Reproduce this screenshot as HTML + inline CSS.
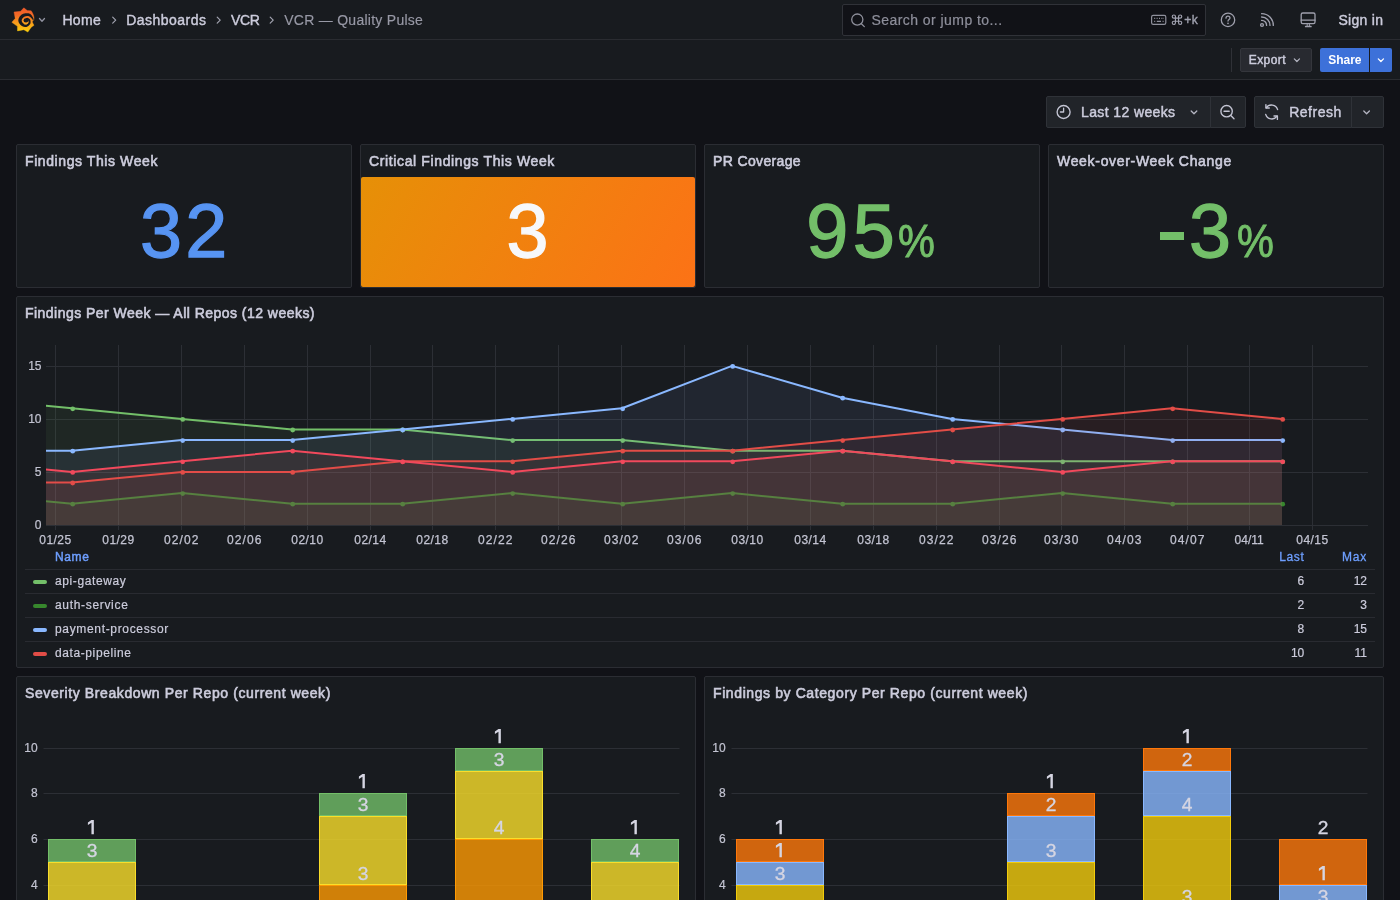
<!DOCTYPE html>
<html lang="en"><head><meta charset="utf-8"><title>VCR — Quality Pulse - Dashboards - Grafana</title>
<style>

*{box-sizing:border-box;margin:0;padding:0}
html,body{width:1400px;height:900px;overflow:hidden;background:#111217;font-family:"Liberation Sans",sans-serif;color:#ccccdc}
body{position:relative}
#root{position:absolute;left:0;top:0;width:1400px;height:900px;will-change:transform}
.t{position:absolute;white-space:pre;display:block}
.abs{position:absolute}
.grp{position:absolute;left:0;top:0;width:0;height:0}
.topnav{position:absolute;left:0;top:0;width:1400px;height:40px;background:#181b1f;border-bottom:1px solid #2a2c31}
.toolbar{position:absolute;left:0;top:40px;width:1400px;height:40px;background:#181b1f;border-bottom:1px solid #2a2c31}
.panel{position:absolute;background:#181b1f;border:1px solid #2b2d33;border-radius:2px;overflow:hidden}
.btn{position:absolute;background:#181b1f;border:1px solid #2e3036;border-radius:2px}
svg{position:absolute;overflow:visible}
svg text{font-family:"Liberation Sans",sans-serif}

</style></head>
<body>
<div id="root">
<div class="topnav"></div><div class="toolbar"></div>
<header class="grp">
<svg style="left:0;top:0" width="60" height="40" viewBox="0 0 60 40">
<defs><linearGradient id="lg" gradientUnits="userSpaceOnUse" x1="0" y1="7.8" x2="0" y2="32.2"><stop offset="0" stop-color="#f1592a"/><stop offset="0.3" stop-color="#f36a26"/><stop offset="0.62" stop-color="#f89c1c"/><stop offset="1" stop-color="#fcd10a"/></linearGradient></defs>
<path d="M23.83 7.83 L27.27 10.60 L31.17 10.83 L32.40 12.73 L33.53 15.33 L34.07 18.00 L33.80 20.00 L32.33 20.93 L32.60 22.83 L34.00 25.33 L31.27 27.13 L27.83 32.07 L23.83 29.73 L17.50 30.90 L17.40 26.33 L11.83 22.33 L15.20 18.40 L14.00 12.00 L20.60 11.33 Z" fill="url(#lg)" stroke="url(#lg)" stroke-width="0.4" stroke-linejoin="round"/>
<path d="M33.77 19.81 L33.64 19.12 L33.43 18.46 L33.16 17.83 L32.85 17.23 L32.50 16.65 L32.16 16.07 L31.77 15.52 L31.34 15.00 L30.86 14.51 L30.33 14.07 L29.77 13.69 L29.13 13.44 L28.46 13.28 L27.79 13.21 L27.12 13.19 L26.47 13.22 L25.83 13.27 L25.20 13.30 L24.58 13.38 L23.96 13.52 L23.36 13.72 L22.78 13.96 L22.23 14.26 L21.70 14.60 L21.20 14.98 L20.74 15.41 L20.30 15.86 L19.89 16.34 L19.52 16.86 L19.19 17.40 L18.91 17.98 L18.67 18.58 L18.50 19.21 L18.38 19.85 L18.33 20.50 L18.41 21.15 L18.56 21.78 L18.78 22.39 L19.06 22.97 L19.38 23.51 L19.74 24.02 L20.14 24.49 L20.56 24.92 L21.00 25.33 L21.46 25.71 L21.95 26.05 L22.47 26.32 L23.01 26.55 L23.57 26.73 L24.13 26.85 L24.70 26.93 L25.27 26.97 L25.83 26.97 L26.39 26.88 L26.93 26.73 L27.44 26.51 L27.92 26.24 L28.37 25.93 L28.77 25.59 L29.15 25.23 L29.49 24.86 L29.82 24.48 L30.09 24.07 L30.30 23.63 L30.45 23.16 L30.54 22.69 L30.57 22.23 L30.57 21.77 L30.54 21.33 L30.49 20.91 L30.43 20.50 L30.33 20.11 L30.15 19.74 L29.92 19.40 L29.66 19.11 L29.37 18.85 L29.07 18.63 L28.77 18.45 L28.48 18.28 L28.21 18.12 L27.95 17.98 L27.66 17.89 L27.36 17.85 L27.07 17.85 L26.78 17.89 L26.52 17.95 L26.27 18.02 L26.04 18.10 L25.83 18.17 L25.83 20.17 L25.87 20.10 L25.92 20.01 L25.99 19.90 L26.09 19.80 L26.21 19.70 L26.34 19.62 L26.48 19.57 L26.62 19.56 L26.75 19.58 L26.89 19.62 L27.05 19.65 L27.22 19.70 L27.41 19.76 L27.61 19.85 L27.79 19.98 L27.95 20.13 L28.08 20.30 L28.17 20.50 L28.25 20.71 L28.34 20.94 L28.44 21.20 L28.53 21.48 L28.58 21.78 L28.61 22.10 L28.58 22.42 L28.50 22.73 L28.36 23.02 L28.14 23.25 L27.91 23.46 L27.66 23.67 L27.40 23.85 L27.11 24.01 L26.81 24.15 L26.50 24.26 L26.17 24.33 L25.83 24.37 L25.50 24.35 L25.16 24.30 L24.84 24.23 L24.52 24.12 L24.21 23.99 L23.91 23.83 L23.63 23.64 L23.37 23.44 L23.12 23.21 L22.88 22.98 L22.65 22.73 L22.43 22.47 L22.23 22.18 L22.05 21.88 L21.90 21.55 L21.79 21.21 L21.71 20.86 L21.67 20.50 L21.70 20.14 L21.78 19.79 L21.89 19.44 L22.04 19.12 L22.21 18.81 L22.41 18.52 L22.62 18.25 L22.85 18.00 L23.10 17.77 L23.33 17.52 L23.58 17.28 L23.85 17.06 L24.13 16.85 L24.44 16.67 L24.77 16.52 L25.11 16.39 L25.47 16.31 L25.83 16.27 L26.21 16.17 L26.62 16.05 L27.05 15.94 L27.51 15.88 L27.98 15.89 L28.43 16.00 L28.86 16.18 L29.28 16.39 L29.71 16.62 L30.12 16.90 L30.50 17.23 L30.83 17.62 L31.21 17.99 L31.63 18.39 L32.05 18.84 L32.40 19.34 L32.64 19.90 Z" fill="#181b1f"/>
<ellipse cx="25.93" cy="20.40" rx="2.35" ry="2.1" fill="#181b1f"/>
<path d="M24.67 24.17 Q27.00 24.50 27.67 23.17" fill="none" stroke="#f9a51a" stroke-width="0.9" stroke-linecap="round"/>
</svg>
<svg style="left:0;top:0" width="1" height="1"><path d="M39.5 18.5 L42 21.2 L44.5 18.5" fill="none" stroke="#9293a1" stroke-width="1.3" stroke-linecap="round" stroke-linejoin="round"/></svg>
<span class="t" style="left:62.40px;top:11.65px;font-size:14px;line-height:17px;color:#ccccdc;letter-spacing:0.360px;-webkit-text-stroke:0.4px #ccccdc;">Home</span>
<svg style="left:0;top:0" width="1" height="1"><path d="M112.70 17.20 L115.70 20.20 L112.70 23.20" fill="none" stroke="#a2a3b0" stroke-width="1.2" stroke-linecap="round" stroke-linejoin="round"/></svg>
<span class="t" style="left:126.20px;top:11.65px;font-size:14px;line-height:17px;color:#ccccdc;letter-spacing:0.480px;-webkit-text-stroke:0.4px #ccccdc;">Dashboards</span>
<svg style="left:0;top:0" width="1" height="1"><path d="M217.20 17.20 L220.20 20.20 L217.20 23.20" fill="none" stroke="#a2a3b0" stroke-width="1.2" stroke-linecap="round" stroke-linejoin="round"/></svg>
<span class="t" style="left:231.00px;top:11.65px;font-size:14px;line-height:17px;color:#ccccdc;letter-spacing:-0.354px;-webkit-text-stroke:0.4px #ccccdc;">VCR</span>
<svg style="left:0;top:0" width="1" height="1"><path d="M270.20 17.20 L273.20 20.20 L270.20 23.20" fill="none" stroke="#a2a3b0" stroke-width="1.2" stroke-linecap="round" stroke-linejoin="round"/></svg>
<span class="t" style="left:284.20px;top:11.65px;font-size:14px;line-height:17px;color:#9899a6;letter-spacing:0.272px;-webkit-text-stroke:0.15px #9899a6;">VCR — Quality Pulse</span>
<div class="abs" style="left:842px;top:4px;width:364px;height:32px;background:#111217;border:1px solid #303238;border-radius:2px"></div>
<svg style="left:0;top:0" width="1" height="1"><circle cx="857.3" cy="19.6" r="5.6" fill="none" stroke="#8f909c" stroke-width="1.3"/><path d="M861.4 23.8 L864.3 26.6" stroke="#8f909c" stroke-width="1.3" stroke-linecap="round"/></svg>
<span class="t" style="left:871.50px;top:11.65px;font-size:14px;line-height:17px;color:#8e8f9b;letter-spacing:0.441px;-webkit-text-stroke:0.2px #8e8f9b;">Search or jump to...</span>
<svg style="left:0;top:0" width="1" height="1"><rect x="1151.6" y="15.4" width="14.2" height="9" rx="1.6" fill="none" stroke="#8f909c" stroke-width="1.2"/>
<path d="M1154.2 18.4h1 M1156.6 18.4h1 M1159 18.4h1 M1161.4 18.4h1 M1163 18.4h.4 M1154.2 21.4h1 M1156.8 21.4h4.2 M1162.6 21.4h1" stroke="#8f909c" stroke-width="1.1"/></svg>
<svg style="left:0;top:0" width="1" height="1"><path d="M1175.45 18.15 V16.55 A1.6 1.6 0 1 0 1173.85 18.15 H1175.45 M1175.45 21.25 V22.85 A1.6 1.6 0 1 1 1173.85 21.25 H1175.45 M1178.55 18.15 V16.55 A1.6 1.6 0 1 1 1180.15 18.15 H1178.55 M1178.55 21.25 V22.85 A1.6 1.6 0 1 0 1180.15 21.25 H1178.55 M1175.45 18.15 H1178.55 V21.25 H1175.45 Z" fill="none" stroke="#a0a1af" stroke-width="1.15" stroke-linejoin="round"/></svg>
<span class="t" style="left:1184.20px;top:13.04px;font-size:12px;line-height:14px;color:#a0a1af;letter-spacing:0.592px;-webkit-text-stroke:0.35px #a0a1af;">+k</span>
<svg style="left:0;top:0" width="1" height="1"><circle cx="1228" cy="19.9" r="6.7" fill="none" stroke="#9fa0ad" stroke-width="1.3"/>
<path d="M1226 18.2c0-1.3 .9-2 2-2s2 .7 2 1.9c0 1.4-2 1.5-2 3" fill="none" stroke="#9fa0ad" stroke-width="1.25" stroke-linecap="round"/><circle cx="1228" cy="23.3" r=".85" fill="#9fa0ad"/></svg>
<svg style="left:0;top:0" width="1" height="1"><g fill="none" stroke="#9fa0ad" stroke-width="1.35" stroke-linecap="round">
<circle cx="1262" cy="25" r="1.4"/><path d="M1261.6 20.4a4.9 4.9 0 0 1 5 5"/><path d="M1261.6 17a8.3 8.3 0 0 1 8.4 8.4"/><path d="M1261.6 13.7a11.6 11.6 0 0 1 11.7 11.7"/></g></svg>
<svg style="left:0;top:0" width="1" height="1"><g fill="none" stroke="#9fa0ad" stroke-width="1.3" stroke-linejoin="round" stroke-linecap="round">
<rect x="1301.2" y="13" width="13.8" height="10.6" rx="1.6"/><path d="M1301.2 20.2h13.8"/><path d="M1305.7 26.5h5.2" stroke-width="1.7"/><path d="M1307.2 24v2 M1309.4 24v2" stroke-width="1"/></g></svg>
<span class="t" style="left:1338.40px;top:11.65px;font-size:14px;line-height:17px;color:#ccccdc;letter-spacing:0.312px;-webkit-text-stroke:0.4px #ccccdc;">Sign in</span>
</header>
<div class="grp">
<div class="abs" style="left:1231px;top:48px;width:1px;height:24px;background:#2f3137"></div>
<div class="abs" style="left:1240px;top:48px;width:72px;height:24px;background:#282a30;border:1px solid #34363c;border-radius:2px"></div>
<span class="t" style="left:1248.70px;top:53.04px;font-size:12px;line-height:14px;color:#ccccdc;letter-spacing:0.452px;-webkit-text-stroke:0.45px #ccccdc;">Export</span>
<svg style="left:0;top:0" width="1" height="1"><path d="M1294.30 58.90 L1296.90 61.50 L1299.50 58.90" fill="none" stroke="#b4b5c2" stroke-width="1.2" stroke-linecap="round" stroke-linejoin="round"/></svg>
<div class="abs" style="left:1320px;top:48px;width:49px;height:24px;background:#3d71d9;border-radius:2px 0 0 2px"></div>
<div class="abs" style="left:1370px;top:48px;width:22px;height:24px;background:#3d71d9;border-radius:0 2px 2px 0"></div>
<span class="t" style="left:1328.30px;top:53.04px;font-size:12px;line-height:14px;color:#ffffff;font-weight:700;letter-spacing:-0.032px;">Share</span>
<svg style="left:0;top:0" width="1" height="1"><path d="M1378.30 58.90 L1380.90 61.50 L1383.50 58.90" fill="none" stroke="#ffffff" stroke-width="1.3" stroke-linecap="round" stroke-linejoin="round"/></svg>
</div>
<div class="grp">
<div class="abs" style="left:1046px;top:96px;width:165px;height:32px;background:#212429;border:1px solid #2f3238;border-radius:2px 0 0 2px"></div>
<div class="abs" style="left:1210px;top:96px;width:36px;height:32px;background:#212429;border:1px solid #2f3238;border-radius:0 2px 2px 0"></div>
<div class="abs" style="left:1254px;top:96px;width:98px;height:32px;background:#212429;border:1px solid #2f3238;border-radius:2px 0 0 2px"></div>
<div class="abs" style="left:1351px;top:96px;width:33px;height:32px;background:#212429;border:1px solid #2f3238;border-radius:0 2px 2px 0"></div>
<svg style="left:0;top:0" width="1" height="1"><circle cx="1063.6" cy="112" r="6.5" fill="none" stroke="#c4c5d4" stroke-width="1.35"/><path d="M1063.6 108.2v3.8h-3.2" fill="none" stroke="#c4c5d4" stroke-width="1.3" stroke-linecap="round" stroke-linejoin="round"/></svg>
<span class="t" style="left:1081.00px;top:103.75px;font-size:14px;line-height:17px;color:#ccccdc;letter-spacing:0.385px;-webkit-text-stroke:0.45px #ccccdc;">Last 12 weeks</span>
<svg style="left:0;top:0" width="1" height="1"><path d="M1191.20 111.00 L1194.00 113.80 L1196.80 111.00" fill="none" stroke="#b4b5c2" stroke-width="1.3" stroke-linecap="round" stroke-linejoin="round"/></svg>
<svg style="left:0;top:0" width="1" height="1"><circle cx="1226.6" cy="111.2" r="5.7" fill="none" stroke="#c4c5d4" stroke-width="1.35"/><path d="M1224 111.2h5.2 M1230.8 115.6l3.2 3.2" fill="none" stroke="#c4c5d4" stroke-width="1.35" stroke-linecap="round"/></svg>
<svg style="left:0;top:0" width="1" height="1"><g transform="translate(2543.2 0) scale(-1 1)" fill="none" stroke="#c4c5d4" stroke-width="1.35" stroke-linecap="round" stroke-linejoin="round"><path d="M1265.6 109.6a6.4 6.4 0 0 1 11.4-1.8"/><path d="M1277.3 104.6v3.4h-3.4"/><path d="M1277.5 114.4a6.4 6.4 0 0 1-11.4 1.8"/><path d="M1265.8 119.4v-3.4h3.4"/></g></svg>
<span class="t" style="left:1289.20px;top:103.75px;font-size:14px;line-height:17px;color:#ccccdc;letter-spacing:0.510px;-webkit-text-stroke:0.45px #ccccdc;">Refresh</span>
<svg style="left:0;top:0" width="1" height="1"><path d="M1363.80 111.00 L1366.60 113.80 L1369.40 111.00" fill="none" stroke="#b4b5c2" stroke-width="1.3" stroke-linecap="round" stroke-linejoin="round"/></svg>
</div>
<section class="grp">
<div class="panel" style="left:16px;top:144px;width:336px;height:144px"></div><span class="t" style="left:25.00px;top:152.75px;font-size:14px;line-height:17px;color:#ccccdc;letter-spacing:0.587px;-webkit-text-stroke:0.6px #ccccdc;">Findings This Week</span>
<span class="t" style="left:140.00px;top:185.80px;font-size:75.6px;line-height:91px;color:#5794f2;-webkit-text-stroke:1.3px #5794f2;letter-spacing:3.2px;">32</span>
</section>
<section class="grp">
<div class="panel" style="left:360px;top:144px;width:336px;height:144px"></div><span class="t" style="left:369.00px;top:152.75px;font-size:14px;line-height:17px;color:#ccccdc;letter-spacing:0.626px;-webkit-text-stroke:0.6px #ccccdc;">Critical Findings This Week</span>
<div class="abs" style="left:361px;top:177px;width:334px;height:110px;border-radius:2px;background:linear-gradient(120deg,#e69007,#fc7216)"></div>
<span class="t" style="left:506.60px;top:185.80px;font-size:75.6px;line-height:91px;color:#f7f8fa;-webkit-text-stroke:1.3px #f7f8fa;letter-spacing:3.2px;">3</span>
</section>
<section class="grp">
<div class="panel" style="left:704px;top:144px;width:336px;height:144px"></div><span class="t" style="left:713.00px;top:152.75px;font-size:14px;line-height:17px;color:#ccccdc;letter-spacing:0.359px;-webkit-text-stroke:0.6px #ccccdc;">PR Coverage</span>
<span class="t" style="left:806.20px;top:185.80px;font-size:75.6px;line-height:91px;color:#73bf69;-webkit-text-stroke:1.3px #73bf69;letter-spacing:4.4px;">95</span>
<span class="t" style="left:898.40px;top:214.43px;font-size:45.8px;line-height:55px;color:#73bf69;-webkit-text-stroke:0.9px #73bf69;transform:scaleX(.905);transform-origin:0 50%;">%</span>
</section>
<section class="grp">
<div class="panel" style="left:1048px;top:144px;width:336px;height:144px"></div><span class="t" style="left:1057.00px;top:152.75px;font-size:14px;line-height:17px;color:#ccccdc;letter-spacing:0.688px;-webkit-text-stroke:0.6px #ccccdc;">Week-over-Week Change</span>
<div class="abs" style="left:1160px;top:232px;width:24.4px;height:7.8px;background:#73bf69"></div>
<span class="t" style="left:1189.00px;top:185.80px;font-size:75.6px;line-height:91px;color:#73bf69;-webkit-text-stroke:1.3px #73bf69;letter-spacing:3.2px;">3</span>
<span class="t" style="left:1236.60px;top:214.43px;font-size:45.8px;line-height:55px;color:#73bf69;-webkit-text-stroke:0.9px #73bf69;transform:scaleX(.905);transform-origin:0 50%;">%</span>
</section>
<section class="grp">
<div class="panel" style="left:16px;top:296px;width:1368px;height:372px"></div><span class="t" style="left:25.00px;top:304.75px;font-size:14px;line-height:17px;color:#ccccdc;letter-spacing:0.467px;-webkit-text-stroke:0.6px #ccccdc;">Findings Per Week — All Repos (12 weeks)</span>
<svg style="left:0;top:0" width="1400" height="900" viewBox="0 0 1400 900">
<defs><clipPath id="tsclip"><rect x="46.0" y="339.0" width="1321.5" height="186.0"/></clipPath></defs>
<path d="M55.5 345.0 V529.5 M118.5 345.0 V529.5 M181.5 345.0 V529.5 M244.5 345.0 V529.5 M307.5 345.0 V529.5 M370.5 345.0 V529.5 M432.5 345.0 V529.5 M495.5 345.0 V529.5 M558.5 345.0 V529.5 M621.5 345.0 V529.5 M684.5 345.0 V529.5 M747.5 345.0 V529.5 M810.5 345.0 V529.5 M873.5 345.0 V529.5 M936.5 345.0 V529.5 M999.5 345.0 V529.5 M1061.5 345.0 V529.5 M1124.5 345.0 V529.5 M1187.5 345.0 V529.5 M1249.5 345.0 V529.5 M1312.5 345.0 V529.5 M46.0 525.5 H1367.5 M46.0 472.5 H1367.5 M46.0 419.5 H1367.5 M46.0 366.5 H1367.5 " stroke="#2c2f35" stroke-width="1" fill="none" shape-rendering="crispEdges"/>
<g clip-path="url(#tsclip)">
<path d="M-38.0 397.7 L72.0 408.3 L182.0 418.9 L292.0 429.5 L402.0 429.5 L512.0 440.1 L622.0 440.1 L732.0 450.7 L842.0 450.7 L952.0 461.3 L1062.0 461.3 L1172.0 461.3 L1282.0 461.3 L1282.0 525.0 L-38.0 525.0 Z" fill="#73bf69" fill-opacity="0.08" stroke="none"/>
<path d="M-38.0 397.7 L72.0 408.3 L182.0 418.9 L292.0 429.5 L402.0 429.5 L512.0 440.1 L622.0 440.1 L732.0 450.7 L842.0 450.7 L952.0 461.3 L1062.0 461.3 L1172.0 461.3 L1282.0 461.3" fill="none" stroke="#73bf69" stroke-width="2" stroke-linejoin="round"/>
<circle cx="72.7" cy="408.8" r="2.4" fill="#73bf69"/>
<circle cx="182.7" cy="419.4" r="2.4" fill="#73bf69"/>
<circle cx="292.7" cy="430.0" r="2.4" fill="#73bf69"/>
<circle cx="402.7" cy="430.0" r="2.4" fill="#73bf69"/>
<circle cx="512.7" cy="440.6" r="2.4" fill="#73bf69"/>
<circle cx="622.7" cy="440.6" r="2.4" fill="#73bf69"/>
<circle cx="732.7" cy="451.2" r="2.4" fill="#73bf69"/>
<circle cx="842.7" cy="451.2" r="2.4" fill="#73bf69"/>
<circle cx="952.7" cy="461.8" r="2.4" fill="#73bf69"/>
<circle cx="1062.7" cy="461.8" r="2.4" fill="#73bf69"/>
<circle cx="1172.7" cy="461.8" r="2.4" fill="#73bf69"/>
<circle cx="1282.7" cy="461.8" r="2.4" fill="#73bf69"/>
<path d="M-38.0 493.1 L72.0 503.7 L182.0 493.1 L292.0 503.7 L402.0 503.7 L512.0 493.1 L622.0 503.7 L732.0 493.1 L842.0 503.7 L952.0 503.7 L1062.0 493.1 L1172.0 503.7 L1282.0 503.7 L1282.0 525.0 L-38.0 525.0 Z" fill="#37872d" fill-opacity="0.08" stroke="none"/>
<path d="M-38.0 493.1 L72.0 503.7 L182.0 493.1 L292.0 503.7 L402.0 503.7 L512.0 493.1 L622.0 503.7 L732.0 493.1 L842.0 503.7 L952.0 503.7 L1062.0 493.1 L1172.0 503.7 L1282.0 503.7" fill="none" stroke="#37872d" stroke-width="2" stroke-linejoin="round"/>
<circle cx="72.7" cy="504.2" r="2.4" fill="#37872d"/>
<circle cx="182.7" cy="493.6" r="2.4" fill="#37872d"/>
<circle cx="292.7" cy="504.2" r="2.4" fill="#37872d"/>
<circle cx="402.7" cy="504.2" r="2.4" fill="#37872d"/>
<circle cx="512.7" cy="493.6" r="2.4" fill="#37872d"/>
<circle cx="622.7" cy="504.2" r="2.4" fill="#37872d"/>
<circle cx="732.7" cy="493.6" r="2.4" fill="#37872d"/>
<circle cx="842.7" cy="504.2" r="2.4" fill="#37872d"/>
<circle cx="952.7" cy="504.2" r="2.4" fill="#37872d"/>
<circle cx="1062.7" cy="493.6" r="2.4" fill="#37872d"/>
<circle cx="1172.7" cy="504.2" r="2.4" fill="#37872d"/>
<circle cx="1282.7" cy="504.2" r="2.4" fill="#37872d"/>
<path d="M-38.0 450.7 L72.0 450.7 L182.0 440.1 L292.0 440.1 L402.0 429.5 L512.0 418.9 L622.0 408.3 L732.0 365.9 L842.0 397.7 L952.0 418.9 L1062.0 429.5 L1172.0 440.1 L1282.0 440.1 L1282.0 525.0 L-38.0 525.0 Z" fill="#8ab8ff" fill-opacity="0.08" stroke="none"/>
<path d="M-38.0 450.7 L72.0 450.7 L182.0 440.1 L292.0 440.1 L402.0 429.5 L512.0 418.9 L622.0 408.3 L732.0 365.9 L842.0 397.7 L952.0 418.9 L1062.0 429.5 L1172.0 440.1 L1282.0 440.1" fill="none" stroke="#8ab8ff" stroke-width="2" stroke-linejoin="round"/>
<circle cx="72.7" cy="451.2" r="2.4" fill="#8ab8ff"/>
<circle cx="182.7" cy="440.6" r="2.4" fill="#8ab8ff"/>
<circle cx="292.7" cy="440.6" r="2.4" fill="#8ab8ff"/>
<circle cx="402.7" cy="430.0" r="2.4" fill="#8ab8ff"/>
<circle cx="512.7" cy="419.4" r="2.4" fill="#8ab8ff"/>
<circle cx="622.7" cy="408.8" r="2.4" fill="#8ab8ff"/>
<circle cx="732.7" cy="366.4" r="2.4" fill="#8ab8ff"/>
<circle cx="842.7" cy="398.2" r="2.4" fill="#8ab8ff"/>
<circle cx="952.7" cy="419.4" r="2.4" fill="#8ab8ff"/>
<circle cx="1062.7" cy="430.0" r="2.4" fill="#8ab8ff"/>
<circle cx="1172.7" cy="440.6" r="2.4" fill="#8ab8ff"/>
<circle cx="1282.7" cy="440.6" r="2.4" fill="#8ab8ff"/>
<path d="M-38.0 482.5 L72.0 482.5 L182.0 471.9 L292.0 471.9 L402.0 461.3 L512.0 461.3 L622.0 450.7 L732.0 450.7 L842.0 440.1 L952.0 429.5 L1062.0 418.9 L1172.0 408.3 L1282.0 418.9 L1282.0 525.0 L-38.0 525.0 Z" fill="#e24d47" fill-opacity="0.08" stroke="none"/>
<path d="M-38.0 482.5 L72.0 482.5 L182.0 471.9 L292.0 471.9 L402.0 461.3 L512.0 461.3 L622.0 450.7 L732.0 450.7 L842.0 440.1 L952.0 429.5 L1062.0 418.9 L1172.0 408.3 L1282.0 418.9" fill="none" stroke="#e24d47" stroke-width="2" stroke-linejoin="round"/>
<circle cx="72.7" cy="483.0" r="2.4" fill="#e24d47"/>
<circle cx="182.7" cy="472.4" r="2.4" fill="#e24d47"/>
<circle cx="292.7" cy="472.4" r="2.4" fill="#e24d47"/>
<circle cx="402.7" cy="461.8" r="2.4" fill="#e24d47"/>
<circle cx="512.7" cy="461.8" r="2.4" fill="#e24d47"/>
<circle cx="622.7" cy="451.2" r="2.4" fill="#e24d47"/>
<circle cx="732.7" cy="451.2" r="2.4" fill="#e24d47"/>
<circle cx="842.7" cy="440.6" r="2.4" fill="#e24d47"/>
<circle cx="952.7" cy="430.0" r="2.4" fill="#e24d47"/>
<circle cx="1062.7" cy="419.4" r="2.4" fill="#e24d47"/>
<circle cx="1172.7" cy="408.8" r="2.4" fill="#e24d47"/>
<circle cx="1282.7" cy="419.4" r="2.4" fill="#e24d47"/>
<path d="M-38.0 461.3 L72.0 471.9 L182.0 461.3 L292.0 450.7 L402.0 461.3 L512.0 471.9 L622.0 461.3 L732.0 461.3 L842.0 450.7 L952.0 461.3 L1062.0 471.9 L1172.0 461.3 L1282.0 461.3 L1282.0 525.0 L-38.0 525.0 Z" fill="#f2495c" fill-opacity="0.08" stroke="none"/>
<path d="M-38.0 461.3 L72.0 471.9 L182.0 461.3 L292.0 450.7 L402.0 461.3 L512.0 471.9 L622.0 461.3 L732.0 461.3 L842.0 450.7 L952.0 461.3 L1062.0 471.9 L1172.0 461.3 L1282.0 461.3" fill="none" stroke="#f2495c" stroke-width="2" stroke-linejoin="round"/>
<circle cx="72.7" cy="472.4" r="2.4" fill="#f2495c"/>
<circle cx="182.7" cy="461.8" r="2.4" fill="#f2495c"/>
<circle cx="292.7" cy="451.2" r="2.4" fill="#f2495c"/>
<circle cx="402.7" cy="461.8" r="2.4" fill="#f2495c"/>
<circle cx="512.7" cy="472.4" r="2.4" fill="#f2495c"/>
<circle cx="622.7" cy="461.8" r="2.4" fill="#f2495c"/>
<circle cx="732.7" cy="461.8" r="2.4" fill="#f2495c"/>
<circle cx="842.7" cy="451.2" r="2.4" fill="#f2495c"/>
<circle cx="952.7" cy="461.8" r="2.4" fill="#f2495c"/>
<circle cx="1062.7" cy="472.4" r="2.4" fill="#f2495c"/>
<circle cx="1172.7" cy="461.8" r="2.4" fill="#f2495c"/>
<circle cx="1282.7" cy="461.8" r="2.4" fill="#f2495c"/>
</g>
<text x="41.5" y="529.1" font-size="12" fill="#c3c4d2" stroke="#c3c4d2" stroke-width="0.2" text-anchor="end">0</text>
<text x="41.5" y="476.1" font-size="12" fill="#c3c4d2" stroke="#c3c4d2" stroke-width="0.2" text-anchor="end">5</text>
<text x="41.5" y="423.1" font-size="12" fill="#c3c4d2" stroke="#c3c4d2" stroke-width="0.2" text-anchor="end">10</text>
<text x="41.5" y="370.1" font-size="12" fill="#c3c4d2" stroke="#c3c4d2" stroke-width="0.2" text-anchor="end">15</text>
<text x="55.2" y="543.8" font-size="12" fill="#c3c4d2" stroke="#c3c4d2" stroke-width="0.25" text-anchor="middle" textLength="31.8" lengthAdjust="spacing">01/25</text>
<text x="118.2" y="543.8" font-size="12" fill="#c3c4d2" stroke="#c3c4d2" stroke-width="0.25" text-anchor="middle" textLength="31.8" lengthAdjust="spacing">01/29</text>
<text x="181.2" y="543.8" font-size="12" fill="#c3c4d2" stroke="#c3c4d2" stroke-width="0.25" text-anchor="middle" textLength="34.4" lengthAdjust="spacing">02/02</text>
<text x="244.2" y="543.8" font-size="12" fill="#c3c4d2" stroke="#c3c4d2" stroke-width="0.25" text-anchor="middle" textLength="34.4" lengthAdjust="spacing">02/06</text>
<text x="307.2" y="543.8" font-size="12" fill="#c3c4d2" stroke="#c3c4d2" stroke-width="0.25" text-anchor="middle" textLength="31.8" lengthAdjust="spacing">02/10</text>
<text x="370.2" y="543.8" font-size="12" fill="#c3c4d2" stroke="#c3c4d2" stroke-width="0.25" text-anchor="middle" textLength="31.8" lengthAdjust="spacing">02/14</text>
<text x="432.2" y="543.8" font-size="12" fill="#c3c4d2" stroke="#c3c4d2" stroke-width="0.25" text-anchor="middle" textLength="31.8" lengthAdjust="spacing">02/18</text>
<text x="495.2" y="543.8" font-size="12" fill="#c3c4d2" stroke="#c3c4d2" stroke-width="0.25" text-anchor="middle" textLength="34.4" lengthAdjust="spacing">02/22</text>
<text x="558.2" y="543.8" font-size="12" fill="#c3c4d2" stroke="#c3c4d2" stroke-width="0.25" text-anchor="middle" textLength="34.4" lengthAdjust="spacing">02/26</text>
<text x="621.2" y="543.8" font-size="12" fill="#c3c4d2" stroke="#c3c4d2" stroke-width="0.25" text-anchor="middle" textLength="34.4" lengthAdjust="spacing">03/02</text>
<text x="684.2" y="543.8" font-size="12" fill="#c3c4d2" stroke="#c3c4d2" stroke-width="0.25" text-anchor="middle" textLength="34.4" lengthAdjust="spacing">03/06</text>
<text x="747.2" y="543.8" font-size="12" fill="#c3c4d2" stroke="#c3c4d2" stroke-width="0.25" text-anchor="middle" textLength="31.8" lengthAdjust="spacing">03/10</text>
<text x="810.2" y="543.8" font-size="12" fill="#c3c4d2" stroke="#c3c4d2" stroke-width="0.25" text-anchor="middle" textLength="31.8" lengthAdjust="spacing">03/14</text>
<text x="873.2" y="543.8" font-size="12" fill="#c3c4d2" stroke="#c3c4d2" stroke-width="0.25" text-anchor="middle" textLength="31.8" lengthAdjust="spacing">03/18</text>
<text x="936.2" y="543.8" font-size="12" fill="#c3c4d2" stroke="#c3c4d2" stroke-width="0.25" text-anchor="middle" textLength="34.4" lengthAdjust="spacing">03/22</text>
<text x="999.2" y="543.8" font-size="12" fill="#c3c4d2" stroke="#c3c4d2" stroke-width="0.25" text-anchor="middle" textLength="34.4" lengthAdjust="spacing">03/26</text>
<text x="1061.2" y="543.8" font-size="12" fill="#c3c4d2" stroke="#c3c4d2" stroke-width="0.25" text-anchor="middle" textLength="34.4" lengthAdjust="spacing">03/30</text>
<text x="1124.2" y="543.8" font-size="12" fill="#c3c4d2" stroke="#c3c4d2" stroke-width="0.25" text-anchor="middle" textLength="34.4" lengthAdjust="spacing">04/03</text>
<text x="1187.2" y="543.8" font-size="12" fill="#c3c4d2" stroke="#c3c4d2" stroke-width="0.25" text-anchor="middle" textLength="34.4" lengthAdjust="spacing">04/07</text>
<text x="1249.2" y="543.8" font-size="12" fill="#c3c4d2" stroke="#c3c4d2" stroke-width="0.25" text-anchor="middle" textLength="29.2" lengthAdjust="spacing">04/11</text>
<text x="1312.2" y="543.8" font-size="12" fill="#c3c4d2" stroke="#c3c4d2" stroke-width="0.25" text-anchor="middle" textLength="31.8" lengthAdjust="spacing">04/15</text>
</svg>
<span class="t" style="left:55.00px;top:549.64px;font-size:12px;line-height:14px;color:#6e9fff;letter-spacing:0.621px;-webkit-text-stroke:0.45px #6e9fff;">Name</span>
<span class="t" style="left:1279.30px;top:549.64px;font-size:12px;line-height:14px;color:#6e9fff;letter-spacing:0.578px;-webkit-text-stroke:0.3px #6e9fff;">Last</span>
<span class="t" style="left:1342.00px;top:549.64px;font-size:12px;line-height:14px;color:#6e9fff;letter-spacing:0.776px;-webkit-text-stroke:0.3px #6e9fff;">Max</span>
<div class="abs" style="left:25px;top:569px;width:1350px;height:1px;background:#292b31"></div>
<div class="abs" style="left:33px;top:580px;width:14px;height:4px;border-radius:2px;background:#73bf69"></div>
<span class="t" style="left:55.00px;top:573.54px;font-size:12px;line-height:14px;color:#ccccdc;letter-spacing:0.616px;-webkit-text-stroke:0.2px #ccccdc;">api-gateway</span>
<span class="t" style="left:1297.61px;top:573.54px;font-size:12px;line-height:14px;color:#ccccdc;-webkit-text-stroke:0.2px #ccccdc;">6</span>
<span class="t" style="left:1353.64px;top:573.54px;font-size:12px;line-height:14px;color:#ccccdc;-webkit-text-stroke:0.2px #ccccdc;">12</span>
<div class="abs" style="left:25px;top:593px;width:1350px;height:1px;background:#292b31"></div>
<div class="abs" style="left:33px;top:604px;width:14px;height:4px;border-radius:2px;background:#37872d"></div>
<span class="t" style="left:55.00px;top:597.54px;font-size:12px;line-height:14px;color:#ccccdc;letter-spacing:0.677px;-webkit-text-stroke:0.2px #ccccdc;">auth-service</span>
<span class="t" style="left:1297.61px;top:597.54px;font-size:12px;line-height:14px;color:#ccccdc;-webkit-text-stroke:0.2px #ccccdc;">2</span>
<span class="t" style="left:1360.31px;top:597.54px;font-size:12px;line-height:14px;color:#ccccdc;-webkit-text-stroke:0.2px #ccccdc;">3</span>
<div class="abs" style="left:25px;top:617px;width:1350px;height:1px;background:#292b31"></div>
<div class="abs" style="left:33px;top:628px;width:14px;height:4px;border-radius:2px;background:#8ab8ff"></div>
<span class="t" style="left:55.00px;top:621.54px;font-size:12px;line-height:14px;color:#ccccdc;letter-spacing:0.664px;-webkit-text-stroke:0.2px #ccccdc;">payment-processor</span>
<span class="t" style="left:1297.61px;top:621.54px;font-size:12px;line-height:14px;color:#ccccdc;-webkit-text-stroke:0.2px #ccccdc;">8</span>
<span class="t" style="left:1353.64px;top:621.54px;font-size:12px;line-height:14px;color:#ccccdc;-webkit-text-stroke:0.2px #ccccdc;">15</span>
<div class="abs" style="left:25px;top:641px;width:1350px;height:1px;background:#292b31"></div>
<div class="abs" style="left:33px;top:652px;width:14px;height:4px;border-radius:2px;background:#e24d47"></div>
<span class="t" style="left:55.00px;top:645.54px;font-size:12px;line-height:14px;color:#ccccdc;letter-spacing:0.599px;-webkit-text-stroke:0.2px #ccccdc;">data-pipeline</span>
<span class="t" style="left:1290.94px;top:645.54px;font-size:12px;line-height:14px;color:#ccccdc;-webkit-text-stroke:0.2px #ccccdc;">10</span>
<span class="t" style="left:1354.53px;top:645.54px;font-size:12px;line-height:14px;color:#ccccdc;-webkit-text-stroke:0.2px #ccccdc;">11</span>
</section>
<section class="grp">
<div class="panel" style="left:16px;top:676px;width:680px;height:300px"></div><span class="t" style="left:25.00px;top:684.75px;font-size:14px;line-height:17px;color:#ccccdc;letter-spacing:0.597px;-webkit-text-stroke:0.6px #ccccdc;">Severity Breakdown Per Repo (current week)</span>
<svg style="left:0;top:0" width="1400" height="900" viewBox="0 0 1400 900">
<defs><clipPath id="bc1"><rect x="17" y="700" width="678" height="200"/></clipPath></defs>
<g clip-path="url(#bc1)">
<path d="M43.5 930.5 H679.5 M43.5 885.5 H679.5 M43.5 839.5 H679.5 M43.5 793.5 H679.5 M43.5 748.5 H679.5 " stroke="#2c2f35" stroke-width="1" fill="none"/>
<text x="37.6" y="889.0" font-size="12" fill="#c3c4d2" stroke="#c3c4d2" stroke-width="0.2" text-anchor="end">4</text>
<text x="37.6" y="843.0" font-size="12" fill="#c3c4d2" stroke="#c3c4d2" stroke-width="0.2" text-anchor="end">6</text>
<text x="37.6" y="797.0" font-size="12" fill="#c3c4d2" stroke="#c3c4d2" stroke-width="0.2" text-anchor="end">8</text>
<text x="37.6" y="752.0" font-size="12" fill="#c3c4d2" stroke="#c3c4d2" stroke-width="0.2" text-anchor="end">10</text>
<rect x="48" y="953" width="88" height="23" fill="#f2495c" fill-opacity="0.8"/>
<rect x="48.5" y="953.5" width="87" height="22" fill="none" stroke="#f2495c" stroke-width="1"/>
<rect x="48" y="930" width="88" height="23" fill="#ff9a03" fill-opacity="0.8"/>
<rect x="48.5" y="930.5" width="87" height="22" fill="none" stroke="#ff9a03" stroke-width="1"/>
<rect x="48" y="862" width="88" height="68" fill="#fade2a" fill-opacity="0.8"/>
<rect x="48.5" y="862.5" width="87" height="67" fill="none" stroke="#fade2a" stroke-width="1"/>
<rect x="48" y="839" width="88" height="23" fill="#73bf69" fill-opacity="0.8"/>
<rect x="48.5" y="839.5" width="87" height="22" fill="none" stroke="#73bf69" stroke-width="1"/>
<rect x="319" y="953" width="88" height="23" fill="#f2495c" fill-opacity="0.8"/>
<rect x="319.5" y="953.5" width="87" height="22" fill="none" stroke="#f2495c" stroke-width="1"/>
<rect x="319" y="885" width="88" height="68" fill="#ff9a03" fill-opacity="0.8"/>
<rect x="319.5" y="885.5" width="87" height="67" fill="none" stroke="#ff9a03" stroke-width="1"/>
<rect x="319" y="816" width="88" height="69" fill="#fade2a" fill-opacity="0.8"/>
<rect x="319.5" y="816.5" width="87" height="68" fill="none" stroke="#fade2a" stroke-width="1"/>
<rect x="319" y="793" width="88" height="23" fill="#73bf69" fill-opacity="0.8"/>
<rect x="319.5" y="793.5" width="87" height="22" fill="none" stroke="#73bf69" stroke-width="1"/>
<rect x="455" y="930" width="88" height="46" fill="#f2495c" fill-opacity="0.8"/>
<rect x="455.5" y="930.5" width="87" height="45" fill="none" stroke="#f2495c" stroke-width="1"/>
<rect x="455" y="839" width="88" height="91" fill="#ff9a03" fill-opacity="0.8"/>
<rect x="455.5" y="839.5" width="87" height="90" fill="none" stroke="#ff9a03" stroke-width="1"/>
<rect x="455" y="771" width="88" height="68" fill="#fade2a" fill-opacity="0.8"/>
<rect x="455.5" y="771.5" width="87" height="67" fill="none" stroke="#fade2a" stroke-width="1"/>
<rect x="455" y="748" width="88" height="23" fill="#73bf69" fill-opacity="0.8"/>
<rect x="455.5" y="748.5" width="87" height="22" fill="none" stroke="#73bf69" stroke-width="1"/>
<rect x="591" y="953" width="88" height="23" fill="#f2495c" fill-opacity="0.8"/>
<rect x="591.5" y="953.5" width="87" height="22" fill="none" stroke="#f2495c" stroke-width="1"/>
<rect x="591" y="862" width="88" height="91" fill="#fade2a" fill-opacity="0.8"/>
<rect x="591.5" y="862.5" width="87" height="90" fill="none" stroke="#fade2a" stroke-width="1"/>
<rect x="591" y="839" width="88" height="23" fill="#73bf69" fill-opacity="0.8"/>
<rect x="591.5" y="839.5" width="87" height="22" fill="none" stroke="#73bf69" stroke-width="1"/>
<path d="M91.45 934.00 H93.85 V948.20 H91.45 V936.70 L87.90 939.00 V936.60 Z" fill="#d5d5e2"/>
<path d="M91.45 911.00 H93.85 V925.20 H91.45 V913.70 L87.90 916.00 V913.60 Z" fill="#d5d5e2"/>
<text x="92.0" y="857.0" font-size="19.2" fill="#d5d5e2" stroke="#d5d5e2" stroke-width="0.35" text-anchor="middle">3</text>
<path d="M91.45 820.00 H93.85 V834.20 H91.45 V822.70 L87.90 825.00 V822.60 Z" fill="#d5d5e2"/>
<path d="M362.45 934.00 H364.85 V948.20 H362.45 V936.70 L358.90 939.00 V936.60 Z" fill="#d5d5e2"/>
<text x="363.0" y="880.0" font-size="19.2" fill="#d5d5e2" stroke="#d5d5e2" stroke-width="0.35" text-anchor="middle">3</text>
<text x="363.0" y="811.0" font-size="19.2" fill="#d5d5e2" stroke="#d5d5e2" stroke-width="0.35" text-anchor="middle">3</text>
<path d="M362.45 774.00 H364.85 V788.20 H362.45 V776.70 L358.90 779.00 V776.60 Z" fill="#d5d5e2"/>
<text x="499.0" y="925.0" font-size="19.2" fill="#d5d5e2" stroke="#d5d5e2" stroke-width="0.35" text-anchor="middle">2</text>
<text x="499.0" y="834.0" font-size="19.2" fill="#d5d5e2" stroke="#d5d5e2" stroke-width="0.35" text-anchor="middle">4</text>
<text x="499.0" y="766.0" font-size="19.2" fill="#d5d5e2" stroke="#d5d5e2" stroke-width="0.35" text-anchor="middle">3</text>
<path d="M498.45 729.00 H500.85 V743.20 H498.45 V731.70 L494.90 734.00 V731.60 Z" fill="#d5d5e2"/>
<path d="M634.45 934.00 H636.85 V948.20 H634.45 V936.70 L630.90 939.00 V936.60 Z" fill="#d5d5e2"/>
<text x="635.0" y="857.0" font-size="19.2" fill="#d5d5e2" stroke="#d5d5e2" stroke-width="0.35" text-anchor="middle">4</text>
<path d="M634.45 820.00 H636.85 V834.20 H634.45 V822.70 L630.90 825.00 V822.60 Z" fill="#d5d5e2"/>
</g></svg>
</section>
<section class="grp">
<div class="panel" style="left:704px;top:676px;width:680px;height:300px"></div><span class="t" style="left:713.00px;top:684.75px;font-size:14px;line-height:17px;color:#ccccdc;letter-spacing:0.598px;-webkit-text-stroke:0.6px #ccccdc;">Findings by Category Per Repo (current week)</span>
<svg style="left:0;top:0" width="1400" height="900" viewBox="0 0 1400 900">
<defs><clipPath id="bc2"><rect x="705" y="700" width="678" height="200"/></clipPath></defs>
<g clip-path="url(#bc2)">
<path d="M731.5 930.5 H1367.5 M731.5 885.5 H1367.5 M731.5 839.5 H1367.5 M731.5 793.5 H1367.5 M731.5 748.5 H1367.5 " stroke="#2c2f35" stroke-width="1" fill="none"/>
<text x="725.6" y="889.0" font-size="12" fill="#c3c4d2" stroke="#c3c4d2" stroke-width="0.2" text-anchor="end">4</text>
<text x="725.6" y="843.0" font-size="12" fill="#c3c4d2" stroke="#c3c4d2" stroke-width="0.2" text-anchor="end">6</text>
<text x="725.6" y="797.0" font-size="12" fill="#c3c4d2" stroke="#c3c4d2" stroke-width="0.2" text-anchor="end">8</text>
<text x="725.6" y="752.0" font-size="12" fill="#c3c4d2" stroke="#c3c4d2" stroke-width="0.2" text-anchor="end">10</text>
<rect x="736" y="953" width="88" height="23" fill="#b877d9" fill-opacity="0.8"/>
<rect x="736.5" y="953.5" width="87" height="22" fill="none" stroke="#b877d9" stroke-width="1"/>
<rect x="736" y="885" width="88" height="68" fill="#f2cc0c" fill-opacity="0.8"/>
<rect x="736.5" y="885.5" width="87" height="67" fill="none" stroke="#f2cc0c" stroke-width="1"/>
<rect x="736" y="862" width="88" height="23" fill="#8ab8ff" fill-opacity="0.8"/>
<rect x="736.5" y="862.5" width="87" height="22" fill="none" stroke="#8ab8ff" stroke-width="1"/>
<rect x="736" y="839" width="88" height="23" fill="#ff780a" fill-opacity="0.8"/>
<rect x="736.5" y="839.5" width="87" height="22" fill="none" stroke="#ff780a" stroke-width="1"/>
<rect x="1007" y="930" width="88" height="46" fill="#b877d9" fill-opacity="0.8"/>
<rect x="1007.5" y="930.5" width="87" height="45" fill="none" stroke="#b877d9" stroke-width="1"/>
<rect x="1007" y="862" width="88" height="68" fill="#f2cc0c" fill-opacity="0.8"/>
<rect x="1007.5" y="862.5" width="87" height="67" fill="none" stroke="#f2cc0c" stroke-width="1"/>
<rect x="1007" y="816" width="88" height="46" fill="#8ab8ff" fill-opacity="0.8"/>
<rect x="1007.5" y="816.5" width="87" height="45" fill="none" stroke="#8ab8ff" stroke-width="1"/>
<rect x="1007" y="793" width="88" height="23" fill="#ff780a" fill-opacity="0.8"/>
<rect x="1007.5" y="793.5" width="87" height="22" fill="none" stroke="#ff780a" stroke-width="1"/>
<rect x="1143" y="908" width="88" height="68" fill="#b877d9" fill-opacity="0.8"/>
<rect x="1143.5" y="908.5" width="87" height="67" fill="none" stroke="#b877d9" stroke-width="1"/>
<rect x="1143" y="816" width="88" height="92" fill="#f2cc0c" fill-opacity="0.8"/>
<rect x="1143.5" y="816.5" width="87" height="91" fill="none" stroke="#f2cc0c" stroke-width="1"/>
<rect x="1143" y="771" width="88" height="45" fill="#8ab8ff" fill-opacity="0.8"/>
<rect x="1143.5" y="771.5" width="87" height="44" fill="none" stroke="#8ab8ff" stroke-width="1"/>
<rect x="1143" y="748" width="88" height="23" fill="#ff780a" fill-opacity="0.8"/>
<rect x="1143.5" y="748.5" width="87" height="22" fill="none" stroke="#ff780a" stroke-width="1"/>
<rect x="1279" y="908" width="88" height="68" fill="#f2cc0c" fill-opacity="0.8"/>
<rect x="1279.5" y="908.5" width="87" height="67" fill="none" stroke="#f2cc0c" stroke-width="1"/>
<rect x="1279" y="885" width="88" height="23" fill="#8ab8ff" fill-opacity="0.8"/>
<rect x="1279.5" y="885.5" width="87" height="22" fill="none" stroke="#8ab8ff" stroke-width="1"/>
<rect x="1279" y="839" width="88" height="46" fill="#ff780a" fill-opacity="0.8"/>
<rect x="1279.5" y="839.5" width="87" height="45" fill="none" stroke="#ff780a" stroke-width="1"/>
<path d="M779.45 934.00 H781.85 V948.20 H779.45 V936.70 L775.90 939.00 V936.60 Z" fill="#d5d5e2"/>
<text x="780.0" y="880.0" font-size="19.2" fill="#d5d5e2" stroke="#d5d5e2" stroke-width="0.35" text-anchor="middle">3</text>
<path d="M779.45 843.00 H781.85 V857.20 H779.45 V845.70 L775.90 848.00 V845.60 Z" fill="#d5d5e2"/>
<path d="M779.45 820.00 H781.85 V834.20 H779.45 V822.70 L775.90 825.00 V822.60 Z" fill="#d5d5e2"/>
<text x="1051.0" y="925.0" font-size="19.2" fill="#d5d5e2" stroke="#d5d5e2" stroke-width="0.35" text-anchor="middle">2</text>
<text x="1051.0" y="857.0" font-size="19.2" fill="#d5d5e2" stroke="#d5d5e2" stroke-width="0.35" text-anchor="middle">3</text>
<text x="1051.0" y="811.0" font-size="19.2" fill="#d5d5e2" stroke="#d5d5e2" stroke-width="0.35" text-anchor="middle">2</text>
<path d="M1050.45 774.00 H1052.85 V788.20 H1050.45 V776.70 L1046.90 779.00 V776.60 Z" fill="#d5d5e2"/>
<text x="1187.0" y="903.0" font-size="19.2" fill="#d5d5e2" stroke="#d5d5e2" stroke-width="0.35" text-anchor="middle">3</text>
<text x="1187.0" y="811.0" font-size="19.2" fill="#d5d5e2" stroke="#d5d5e2" stroke-width="0.35" text-anchor="middle">4</text>
<text x="1187.0" y="766.0" font-size="19.2" fill="#d5d5e2" stroke="#d5d5e2" stroke-width="0.35" text-anchor="middle">2</text>
<path d="M1186.45 729.00 H1188.85 V743.20 H1186.45 V731.70 L1182.90 734.00 V731.60 Z" fill="#d5d5e2"/>
<text x="1323.0" y="903.0" font-size="19.2" fill="#d5d5e2" stroke="#d5d5e2" stroke-width="0.35" text-anchor="middle">3</text>
<path d="M1322.45 866.00 H1324.85 V880.20 H1322.45 V868.70 L1318.90 871.00 V868.60 Z" fill="#d5d5e2"/>
<text x="1323.0" y="834.0" font-size="19.2" fill="#d5d5e2" stroke="#d5d5e2" stroke-width="0.35" text-anchor="middle">2</text>
</g></svg>
</section>
</div>
</body></html>
